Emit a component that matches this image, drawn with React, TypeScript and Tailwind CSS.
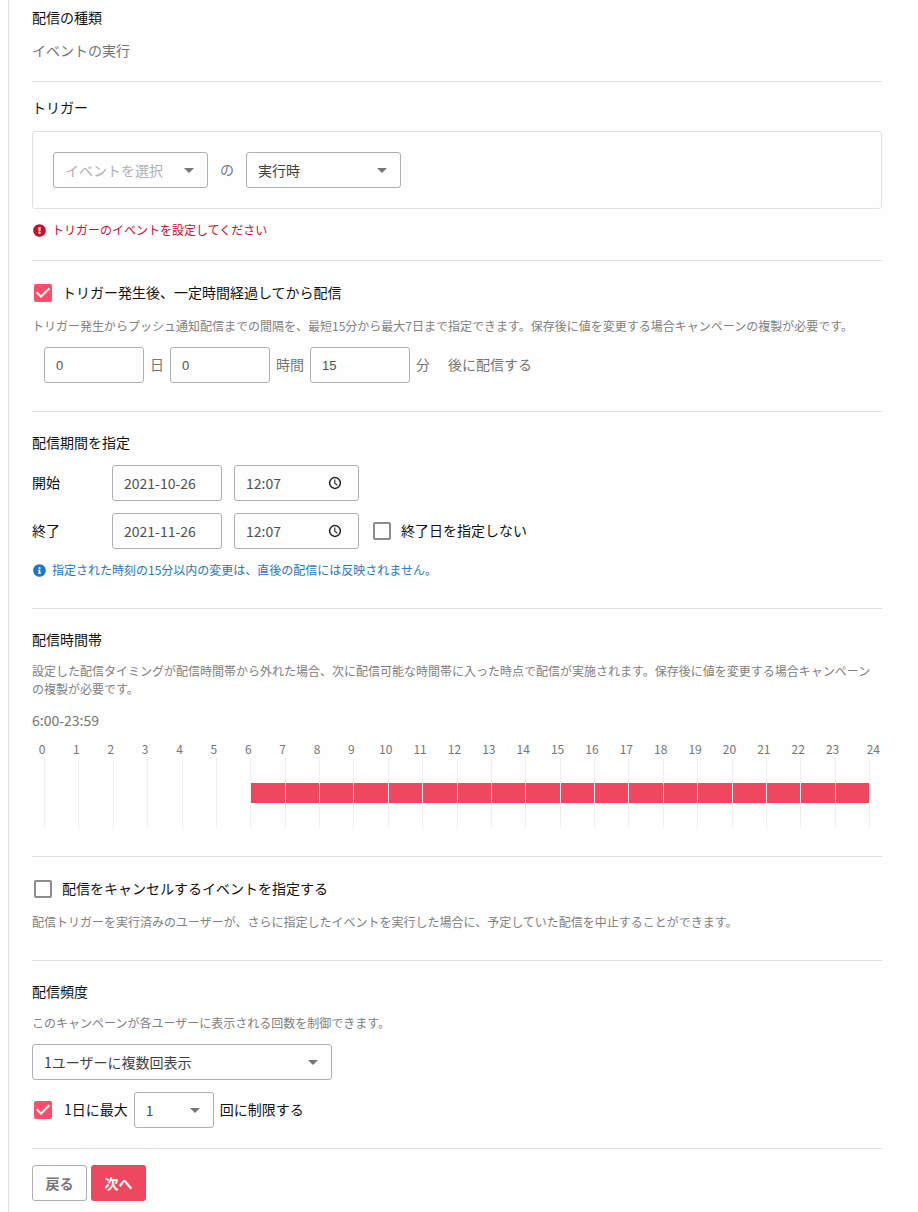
import { useState } from "react";
import type { InputHTMLAttributes, ReactNode, SelectHTMLAttributes } from "react";
import { FaExclamationCircle, FaInfoCircle } from "react-icons/fa";

const HOURS = Array.from({ length: 24 }, (_, hour) => hour);
const START_HOUR = 6;

function Section({ className = "", children }: { className?: string; children: ReactNode }) {
  return <section className={`border-b border-[#e0e0e0] ${className}`}>{children}</section>;
}

function Heading({ children }: { children: ReactNode }) {
  return <h2 className="pb-0.5 text-sm leading-[18px] text-[#111111]">{children}</h2>;
}

function Text({ className = "", children }: { className?: string; children: ReactNode }) {
  return <span className={`block pb-0.5 text-sm leading-[18px] ${className}`}>{children}</span>;
}

function Help({ className = "", children }: { className?: string; children: ReactNode }) {
  return <p className={`text-xs leading-[18px] text-[#808080] ${className}`}>{children}</p>;
}

function Select({
  width,
  tone = "text-[#424242]",
  children,
  ...rest
}: { width: string; tone?: string; children: ReactNode } & SelectHTMLAttributes<HTMLSelectElement>) {
  return (
    <div className={`relative ${width}`}>
      <select
        className={`block h-9 w-full appearance-none rounded-[3px] border border-[#b0b0b4] bg-transparent pl-[11px] pr-8 text-sm ${tone}`}
        {...rest}
      >
        {children}
      </select>
      <svg
        viewBox="0 0 24 24"
        className="pointer-events-none absolute right-[7px] top-1.5 h-6 w-6 fill-[#757575]"
        aria-hidden="true"
      >
        <path d="M7 10l5 5 5-5z" />
      </svg>
    </div>
  );
}

function TextBox({
  width,
  font = "text-sm",
  ...rest
}: { width: string; font?: string } & InputHTMLAttributes<HTMLInputElement>) {
  return (
    <input
      type="text"
      className={`block h-9 rounded-[3px] border border-[#b0b0b4] bg-transparent px-[11px] text-[#505050] ${width} ${font}`}
      {...rest}
    />
  );
}

function NumberBox({ label, value }: { label: string; value: string }) {
  return (
    <TextBox
      width="w-[100px]"
      font="text-[13px] font-['Liberation_Sans',sans-serif]"
      aria-label={label}
      defaultValue={value}
    />
  );
}

function TimeBox({ label, value }: { label: string; value: string }) {
  return (
    <div className="relative">
      <TextBox width="w-[125px]" aria-label={label} defaultValue={value} />
      <svg
        viewBox="0 0 14 14"
        className="pointer-events-none absolute right-[17px] top-[11px] h-3.5 w-3.5 fill-none stroke-[#212121]"
        aria-hidden="true"
      >
        <circle cx="7" cy="7" r="5.4" strokeWidth="1.5" />
        <path d="M6.8 3.6V7.2L9.4 9.4" strokeWidth="1.1" />
      </svg>
    </div>
  );
}

function CheckBox({ label, initial = false, gap = "gap-2.5" }: { label: string; initial?: boolean; gap?: string }) {
  const [checked, setChecked] = useState(initial);
  return (
    <label className={`flex items-center text-[#111111] ${gap}`}>
      <span className="relative ml-0.5 block h-[18px] w-[18px]">
        <input
          type="checkbox"
          checked={checked}
          onChange={(e) => setChecked(e.target.checked)}
          className="block h-[18px] w-[18px] appearance-none rounded-xs border-2 border-[#8c8c90] checked:border-[#ff4d6b] checked:bg-[#ff4d6b]"
        />
        {checked && (
          <svg
            viewBox="3 3 18 18"
            className="pointer-events-none absolute inset-0 h-[18px] w-[18px] fill-white"
            aria-hidden="true"
          >
            <path d="M10 17l-5-5 1.41-1.41L10 14.17l7.59-7.59L19 8l-9 9z" />
          </svg>
        )}
      </span>
      <Text>{label}</Text>
    </label>
  );
}

function Message({ kind, children }: { kind: "error" | "info"; children: ReactNode }) {
  const Icon = kind === "error" ? FaExclamationCircle : FaInfoCircle;
  return (
    <p
      className={`mt-3 flex items-center gap-1.5 pl-px text-xs leading-[18px] ${
        kind === "error" ? "text-[#c8102e]" : "text-[#1e78c2]"
      }`}
    >
      <Icon className="h-[13px] w-[13px]" aria-hidden="true" />
      {children}
    </p>
  );
}

function HourChart() {
  return (
    <div>
      <div className="mt-[9px] flex text-xs leading-[18px]">
        {HOURS.map((hour) => (
          <div key={hour} className="flex-1">
            <span className="block w-5 text-center">{hour}</span>
          </div>
        ))}
        <div className="w-[25px] pr-0.5 text-right">24</div>
      </div>
      <div className="mx-3 flex h-[70px] border-r border-[#f0f0f0]">
        {HOURS.map((hour) => (
          <div key={hour} className="flex flex-1 items-center border-l border-[#f0f0f0]">
            {hour >= START_HOUR && <div className="h-5 w-full bg-[#ee4861]" />}
          </div>
        ))}
      </div>
    </div>
  );
}

export default function App() {
  return (
    <div className="min-h-screen bg-[#fefefe] pl-2 font-['Noto_Sans_CJK_JP',sans-serif] text-sm leading-5 text-[#757575]">
      <main className="min-h-screen border-l border-[#e0e0e0] pb-2 pl-[23px] pr-9">
        <Section className="pb-5 pt-2">
          <Heading>配信の種類</Heading>
          <Text className="mt-[13px]">イベントの実行</Text>
        </Section>

        <Section className="pb-[21px] pt-4">
          <Heading>トリガー</Heading>
          <div className="mt-[13px] flex items-center gap-3 rounded-[3px] border border-[#e0e0e0] p-5">
            <Select width="w-[155px]" tone="text-[#b0b0b0]" aria-label="イベント">
              <option>イベントを選択</option>
            </Select>
            <Text>の</Text>
            <Select width="w-[155px]" aria-label="タイミング">
              <option>実行時</option>
            </Select>
          </div>
          <Message kind="error">トリガーのイベントを設定してください</Message>
        </Section>

        <Section className="pb-7 pt-[22px]">
          <CheckBox label="トリガー発生後、一定時間経過してから配信" initial />
          <Help className="mt-[14px]">
            トリガー発生からプッシュ通知配信までの間隔を、最短15分から最大7日まで指定できます。保存後に値を変更する場合キャンペーンの複製が必要です。
          </Help>
          <div className="mt-3 flex items-center gap-1.5 pl-3">
            <NumberBox label="日" value="0" />
            <Text>日</Text>
            <NumberBox label="時間" value="0" />
            <Text>時間</Text>
            <NumberBox label="分" value="15" />
            <Text>分</Text>
            <Text className="ml-3">後に配信する</Text>
          </div>
        </Section>

        <Section className="pb-[29px] pt-[21px]">
          <Heading>配信期間を指定</Heading>
          <div className="mt-3 flex items-center gap-3">
            <Text className="w-[68px] text-[#111111]">開始</Text>
            <TextBox width="w-[110px]" aria-label="開始日" defaultValue="2021-10-26" />
            <TimeBox label="開始時刻" value="12:07" />
          </div>
          <div className="mt-3 flex items-center gap-3">
            <Text className="w-[68px] text-[#111111]">終了</Text>
            <TextBox width="w-[110px]" aria-label="終了日" defaultValue="2021-11-26" />
            <TimeBox label="終了時刻" value="12:07" />
            <CheckBox label="終了日を指定しない" />
          </div>
          <Message kind="info">指定された時刻の15分以内の変更は、直後の配信には反映されません。</Message>
        </Section>

        <Section className="pb-7 pt-[21px]">
          <Heading>配信時間帯</Heading>
          <Help className="mt-3">
            設定した配信タイミングが配信時間帯から外れた場合、次に配信可能な時間帯に入った時点で配信が実施されます。保存後に値を変更する場合キャンペーンの複製が必要です。
          </Help>
          <Text className="mt-[13px]">6:00-23:59</Text>
          <HourChart />
        </Section>

        <Section className="pb-[29px] pt-[22px]">
          <CheckBox label="配信をキャンセルするイベントを指定する" />
          <Help className="mt-[14px]">
            配信トリガーを実行済みのユーザーが、さらに指定したイベントを実行した場合に、予定していた配信を中止することができます。
          </Help>
        </Section>

        <Section className="pb-5 pt-[21px]">
          <Heading>配信頻度</Heading>
          <Help className="mt-3">このキャンペーンが各ユーザーに表示される回数を制御できます。</Help>
          <div className="mt-3">
            <Select width="w-[300px]" aria-label="表示回数">
              <option>1ユーザーに複数回表示</option>
            </Select>
          </div>
          <div className="mt-3 flex items-center gap-1.5 text-[#111111]">
            <CheckBox label="1日に最大" initial gap="gap-3" />
            <Select width="w-20" tone="text-[#505050]" aria-label="1日の最大回数">
              <option>1</option>
            </Select>
            <Text>回に制限する</Text>
          </div>
        </Section>

        <div className="flex gap-1 pt-4">
          <button type="button" className="h-9 w-[55px] rounded-[3px] border border-[#b0b0b4] font-bold">
            戻る
          </button>
          <button type="button" className="h-9 w-[55px] rounded-[3px] bg-[#ee4861] font-bold text-white">
            次へ
          </button>
        </div>
      </main>
    </div>
  );
}
